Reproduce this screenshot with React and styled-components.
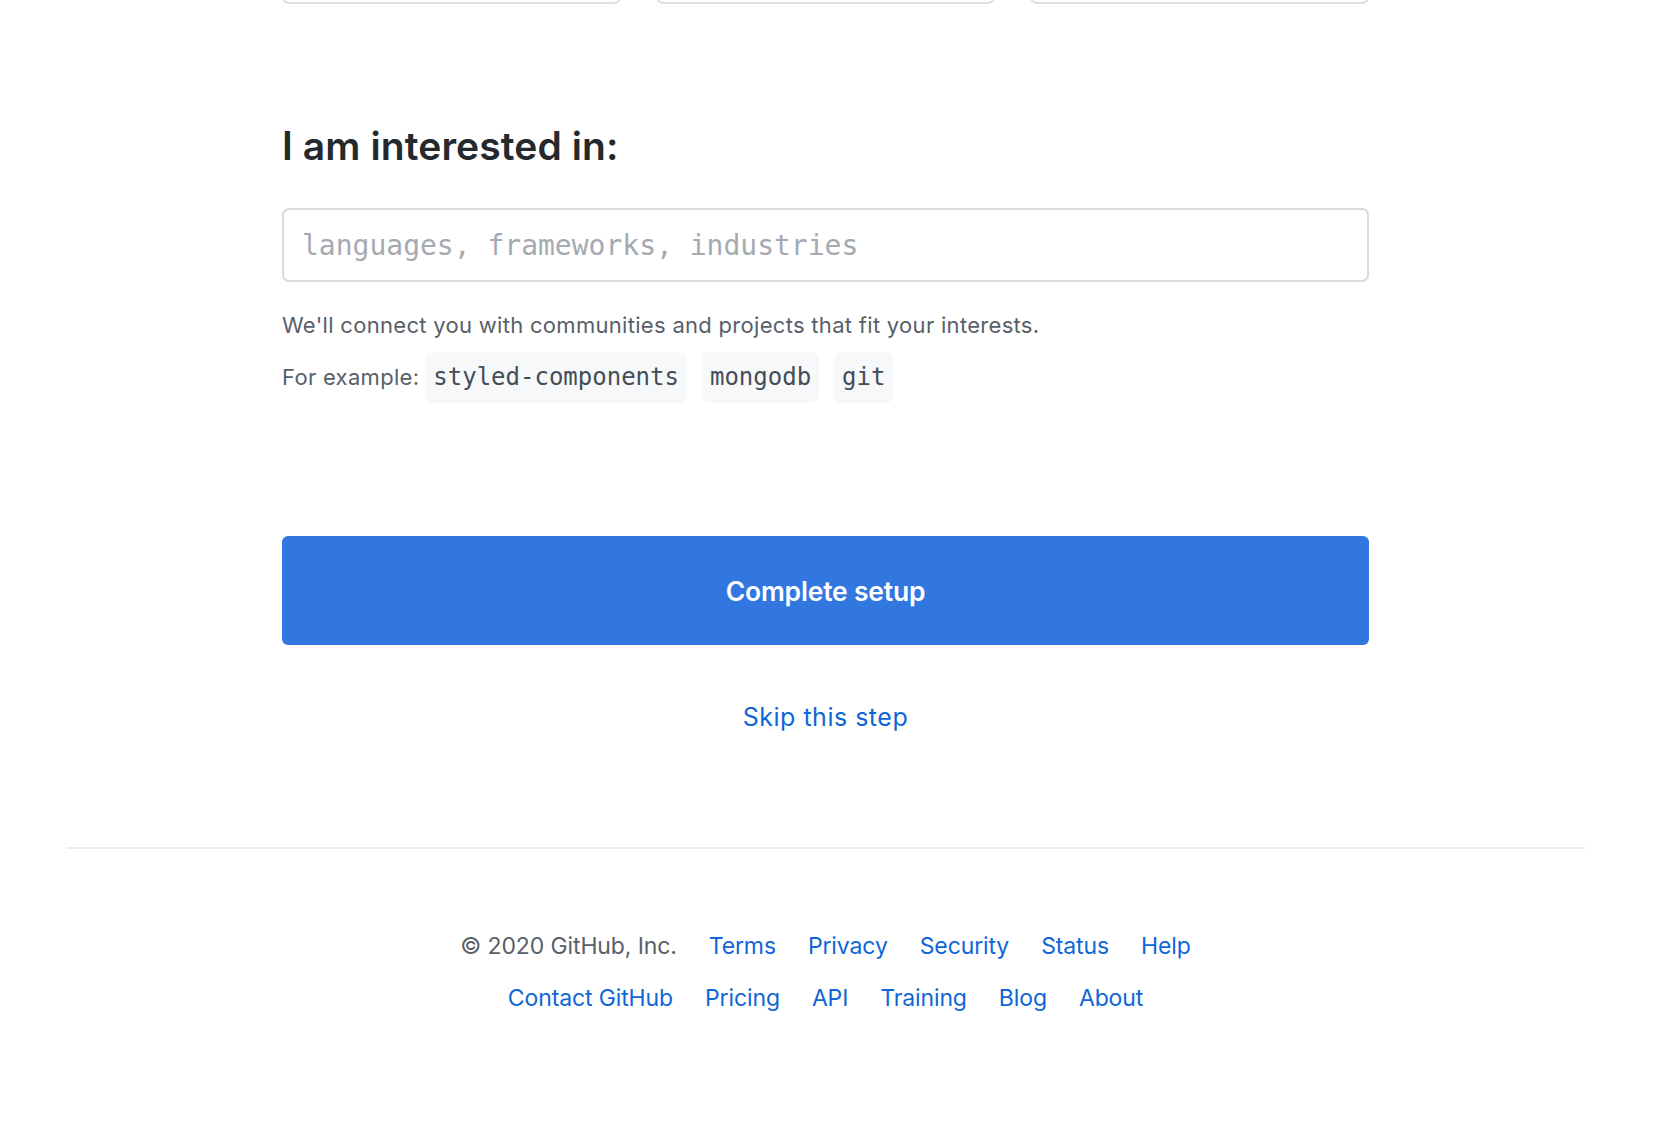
import React from "react";
import styled, { createGlobalStyle } from "styled-components";

const GlobalStyle = createGlobalStyle`
  html, body {
    margin: 0;
    padding: 0;
    background: #ffffff;
  }
  body {
    font-family: "Inter", "Noto Sans", "Liberation Sans", sans-serif;
    color: #24292e;
    -webkit-font-smoothing: antialiased;
  }
  * { box-sizing: border-box; }
`;

const Page = styled.div`
  width: calc(100% - 13px);
  overflow: hidden;
`;

const Main = styled.main`
  width: 1087px;
  margin: 0 auto;
  display: flex;
  flex-direction: column;
`;

const CardRow = styled.div`
  display: grid;
  grid-template-columns: repeat(3, 1fr);
  column-gap: 35px;
  margin-top: -96px;
`;

const Card = styled.div`
  height: 100px;
  border: 2px solid #dcdfe3;
  border-radius: 7px;
  background: #fff;
`;

const Heading = styled.h2`
  margin: 117px 0 0;
  font-size: 39px;
  line-height: 50px;
  font-weight: 600;
  color: #24292e;
  letter-spacing: 0.1px;
`;

const Input = styled.input`
  margin-top: 37px;
  width: 100%;
  height: 74px;
  border: 2px solid #d7dadd;
  border-radius: 7px;
  padding: 0 18px;
  font-family: "DejaVu Sans Mono", "Liberation Mono", monospace;
  font-size: 28px;
  color: #24292e;
  outline: none;
  background: #fff;

  &::placeholder {
    color: #a5aab0;
  }
`;

const Note = styled.p`
  margin: 28px 0 0;
  font-size: 22px;
  line-height: 31.5px;
  color: #586069;
  letter-spacing: 0.3px;
`;

const ExampleRow = styled.div`
  margin-top: 10px;
  display: flex;
  align-items: center;
`;

const ExampleLabel = styled.span`
  font-size: 22px;
  color: #586069;
  margin-right: 6px;
  letter-spacing: 0.3px;
`;

const Tag = styled.code`
  display: inline-flex;
  align-items: center;
  height: 51px;
  padding: 0 8px;
  margin-right: 15px;
  border-radius: 7px;
  background: #f6f8fa;
  font-family: "DejaVu Sans Mono", "Liberation Mono", monospace;
  font-size: 24px;
  color: #444d56;
`;

const PrimaryButton = styled.button`
  margin-top: 133px;
  width: 100%;
  height: 109px;
  padding-top: 3px;
  border: none;
  border-radius: 6px;
  background: #3277e0;
  color: #ffffff;
  font-family: "Inter", "Liberation Sans", sans-serif;
  font-size: 26.5px;
  font-weight: 600;
  letter-spacing: -0.2px;
  cursor: pointer;
`;

const SkipLink = styled.a`
  margin-top: 54px;
  align-self: center;
  font-size: 25px;
  line-height: 36px;
  color: #0f66d6;
  text-decoration: none;
  letter-spacing: 0.5px;
`;

const Footer = styled.footer`
  width: 1519px;
  margin: 112px auto 0;
  border-top: 2px solid #eaecef;
  padding-top: 80px;
  padding-bottom: 120px;
  display: flex;
  flex-direction: column;
  align-items: center;
  row-gap: 18px;
`;

const FooterRow = styled.ul`
  list-style: none;
  margin: 0;
  padding: 0;
  display: flex;
  align-items: center;
  column-gap: 32px;
  font-size: 23px;
  line-height: 34px;
  letter-spacing: -0.12px;
`;

const FooterText = styled.li`
  color: #586069;
`;

const FooterLink = styled.a`
  color: #0f66d6;
  text-decoration: none;
`;

const row1 = ["Terms", "Privacy", "Security", "Status", "Help"];
const row2 = ["Contact GitHub", "Pricing", "API", "Training", "Blog", "About"];

export default function App() {
  return (
    <Page>
      <GlobalStyle />
      <Main>
        <CardRow>
          <Card />
          <Card />
          <Card />
        </CardRow>
        <Heading>I am interested in:</Heading>
        <Input placeholder="languages, frameworks, industries" />
        <Note>We'll connect you with communities and projects that fit your interests.</Note>
        <ExampleRow>
          <ExampleLabel>For example:</ExampleLabel>
          <Tag>styled-components</Tag>
          <Tag>mongodb</Tag>
          <Tag>git</Tag>
        </ExampleRow>
        <PrimaryButton>Complete setup</PrimaryButton>
        <SkipLink href="#">Skip this step</SkipLink>
      </Main>
      <Footer>
        <FooterRow>
          <FooterText>© 2020 GitHub, Inc.</FooterText>
          {row1.map((l) => (
            <li key={l}>
              <FooterLink href="#">{l}</FooterLink>
            </li>
          ))}
        </FooterRow>
        <FooterRow>
          {row2.map((l) => (
            <li key={l}>
              <FooterLink href="#">{l}</FooterLink>
            </li>
          ))}
        </FooterRow>
      </Footer>
    </Page>
  );
}
